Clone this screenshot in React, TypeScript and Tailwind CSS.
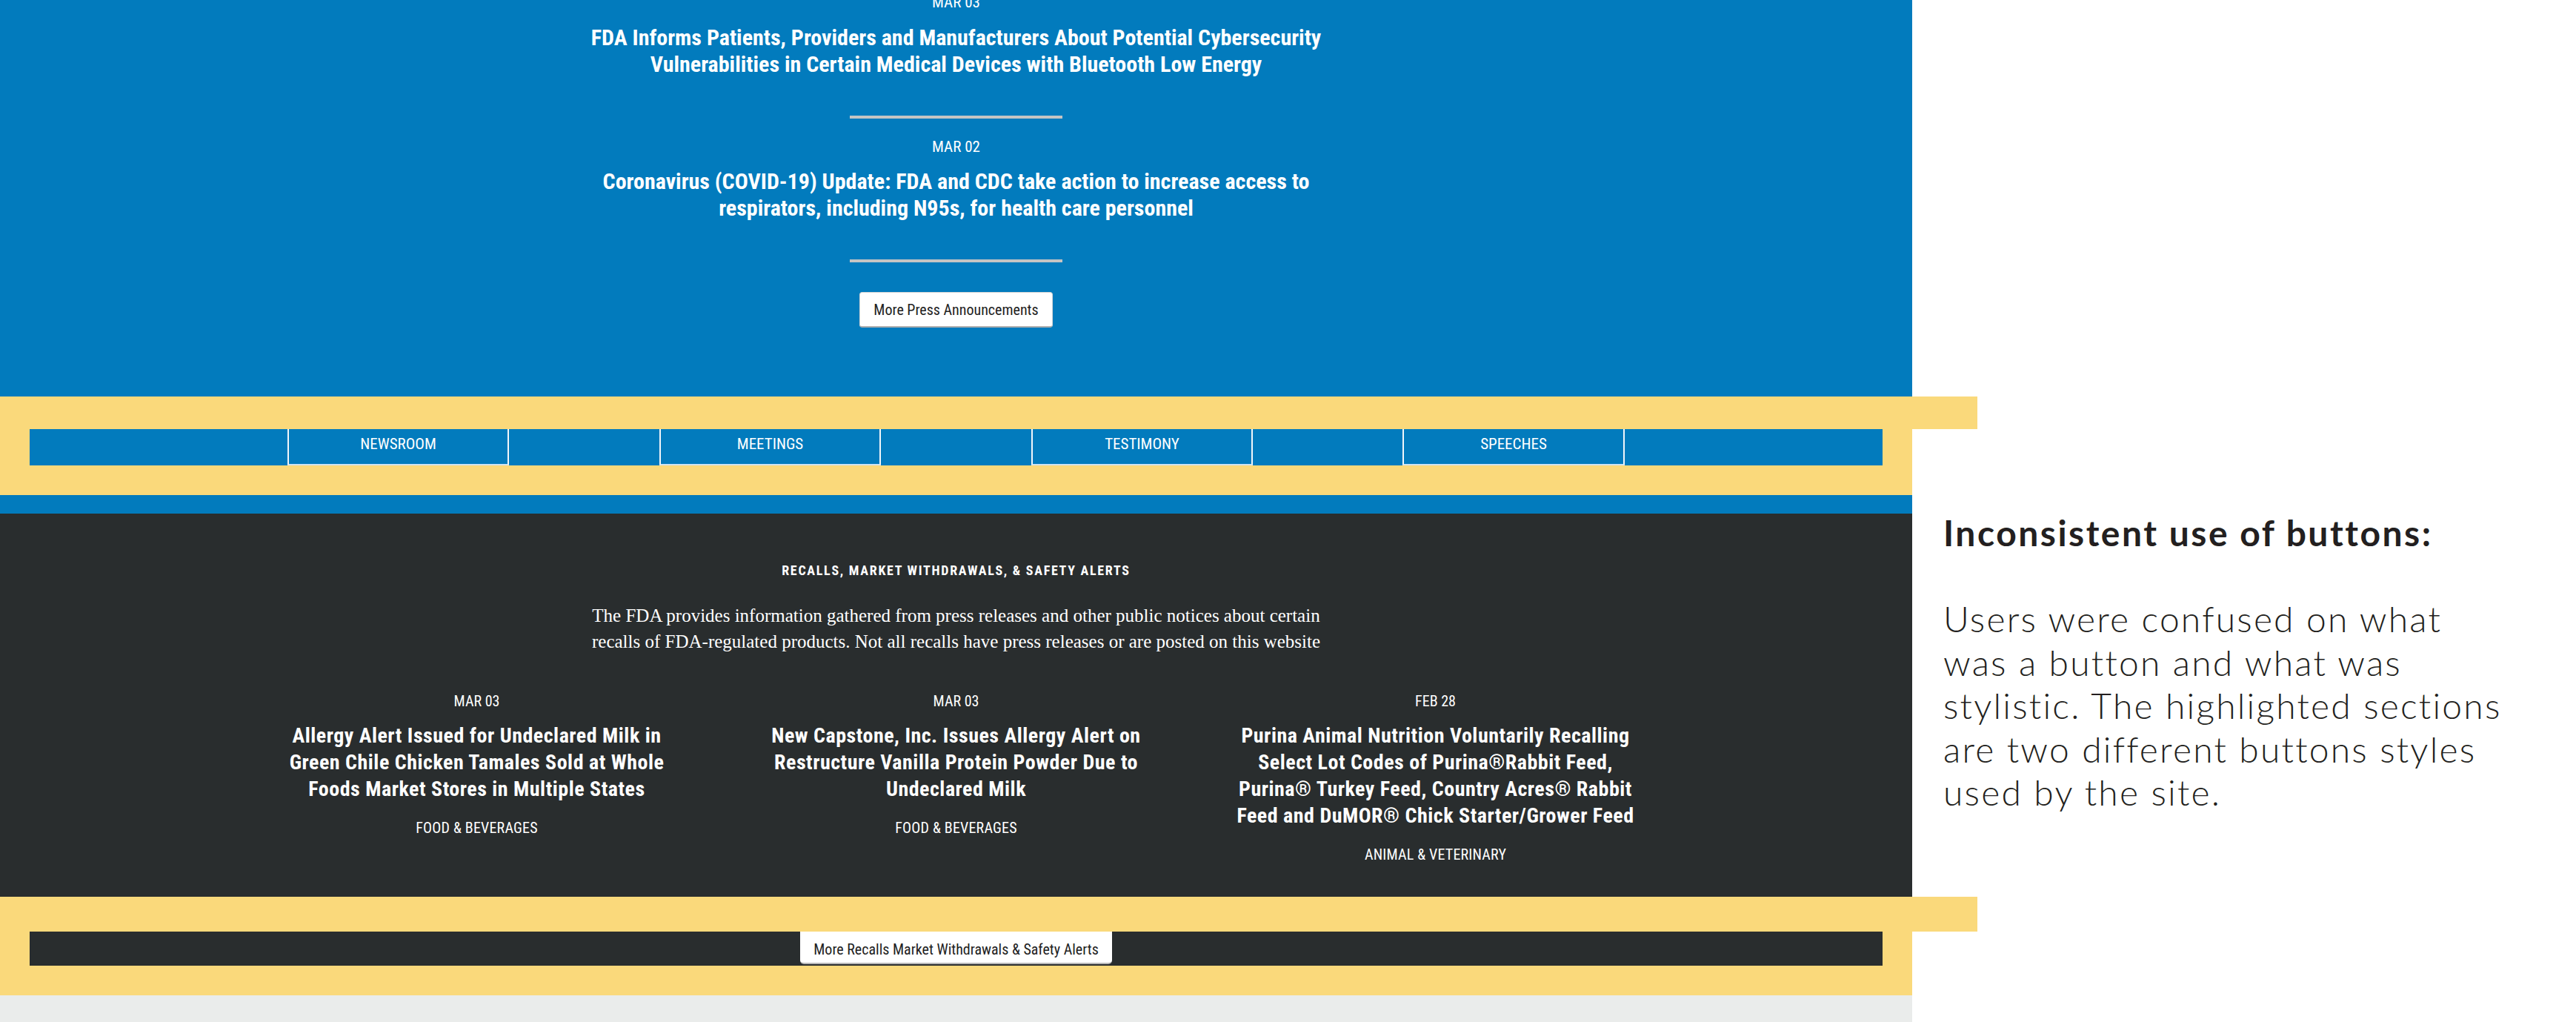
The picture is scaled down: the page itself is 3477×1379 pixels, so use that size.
import React from "react";

const cond = "font-['Roboto',sans-serif] [font-stretch:75%]";

const pressItems = [
  {
    date: "MAR 03",
    lines: [
      "FDA Informs Patients, Providers and Manufacturers About Potential Cybersecurity",
      "Vulnerabilities in Certain Medical Devices with Bluetooth Low Energy",
    ],
  },
  {
    date: "MAR 02",
    lines: [
      "Coronavirus (COVID-19) Update: FDA and CDC take action to increase access to",
      "respirators, including N95s, for health care personnel",
    ],
  },
];

const navCells = [
  { w: "w-[348px]", label: "" },
  { w: "w-[299px]", label: "NEWSROOM" },
  { w: "w-[203px]", label: "" },
  { w: "w-[299px]", label: "MEETINGS" },
  { w: "w-[203px]", label: "" },
  { w: "w-[299px]", label: "TESTIMONY" },
  { w: "w-[202px]", label: "" },
  { w: "w-[300px]", label: "SPEECHES" },
  { w: "w-[348px]", label: "" },
];

const recalls = [
  {
    date: "MAR 03",
    lines: [
      "Allergy Alert Issued for Undeclared Milk in",
      "Green Chile Chicken Tamales Sold at Whole",
      "Foods Market Stores in Multiple States",
    ],
    tag: "FOOD & BEVERAGES",
  },
  {
    date: "MAR 03",
    lines: [
      "New Capstone, Inc. Issues Allergy Alert on",
      "Restructure Vanilla Protein Powder Due to",
      "Undeclared Milk",
    ],
    tag: "FOOD & BEVERAGES",
  },
  {
    date: "FEB 28",
    lines: [
      "Purina Animal Nutrition Voluntarily Recalling",
      "Select Lot Codes of Purina®Rabbit Feed,",
      "Purina® Turkey Feed, Country Acres® Rabbit",
      "Feed and DuMOR® Chick Starter/Grower Feed",
    ],
    tag: "ANIMAL & VETERINARY",
  },
];

function Divider() {
  return <div className="mx-auto mt-[51px] h-[4px] w-[287px] bg-[#c4c4c4]" />;
}

function Lines({ lines }: { lines: string[] }) {
  return (
    <>
      {lines.map((l, i) => (
        <span key={i} className="block whitespace-nowrap">
          {l}
        </span>
      ))}
    </>
  );
}

export default function App() {
  return (
    <div className="flex h-[1379px] w-[3477px] overflow-hidden bg-white">
      {/* screenshot of the site */}
      <div className={`w-[2581px] shrink-0 ${cond}`}>
        {/* Press announcements */}
        <section className="h-[535px] overflow-hidden bg-[#027bbd] text-center text-white">
          {pressItems.map((item, i) => (
            <div key={i}>
              <div className={`text-[21px] leading-[24px] ${i === 0 ? "mt-[-9px]" : "mt-[26px]"}`}>
                {item.date}
              </div>
              <h3 className={`text-[30px] font-bold leading-[36px] ${i === 0 ? "mt-[18px]" : "mt-[17px]"}`}>
                <Lines lines={item.lines} />
              </h3>
              <Divider />
            </div>
          ))}
          <div className="mt-[40px]">
            <button className="inline-flex h-[48px] items-center rounded-[4px] border border-[#d6d6d6] border-b-2 border-b-[#b0b0b0] bg-white px-[18px] text-[20px] text-[#222]">
              More Press Announcements
            </button>
          </div>
        </section>

        {/* Highlight 1: nav buttons */}
        <div className="bg-[#fad97b] px-[40px] pb-[40px]">
          <div className="-ml-[40px] h-[44px] w-[2669px] bg-[#fad97b]" />
          <div className="flex h-[49px] bg-[#027bbd] text-white">
            {navCells.map((c, i) =>
              c.label ? (
                <div
                  key={i}
                  className={`${c.w} shrink-0 border-x-2 border-b-2 border-x-[#f2f6fa] border-b-[#cfe3f1] pt-[8px] text-center text-[21px] leading-[24px]`}
                >
                  {c.label}
                </div>
              ) : (
                <div key={i} className={`${c.w} shrink-0`} />
              )
            )}
          </div>
        </div>
        <div className="h-[25px] bg-[#027bbd]" />

        {/* Recalls */}
        <section className="h-[517px] bg-[#292d2e] pt-[66px] text-center text-white">
          <h2 className="text-[18px] font-bold leading-[22px] tracking-[1.7px]">
            RECALLS, MARKET WITHDRAWALS, &amp; SAFETY ALERTS
          </h2>
          <p className="mt-[32px] font-['Liberation_Serif',serif] text-[25px] leading-[35px] [font-stretch:100%]">
            The FDA provides information gathered from press releases and other public notices about certain
            <br />
            recalls of FDA-regulated products. Not all recalls have press releases or are posted on this website
          </p>
          <div className="mx-auto mt-[51px] grid w-[1941px] grid-cols-3 items-start">
            {recalls.map((r, i) => (
              <div key={i} className="px-[30px]">
                <div className="text-[20px] leading-[24px]">{r.date}</div>
                <h3 className="mt-[17px] text-[28px] font-bold leading-[36px] tracking-[0.5px]">
                  <Lines lines={r.lines} />
                </h3>
                <div className="mt-[22px] text-[20px] leading-[24px] tracking-[0.2px]">{r.tag}</div>
              </div>
            ))}
          </div>
        </section>

        {/* Highlight 2: more recalls */}
        <div className="bg-[#fad97b] px-[40px] pb-[40px]">
          <div className="-ml-[40px] h-[47px] w-[2669px] bg-[#fad97b]" />
          <div className="flex h-[46px] justify-center bg-[#292d2e]">
            <button className="h-[44px] self-start rounded-b-[5px] border-b-2 border-b-[#b8b8b8] bg-white px-[18px] pt-[5px] text-[20px] leading-[24px] text-[#222]">
              More Recalls Market Withdrawals &amp; Safety Alerts
            </button>
          </div>
        </div>
        <div className="h-[36px] bg-[#eaeceb]" />
      </div>

      {/* annotation */}
      <div className="pl-[42px] pt-[690px] font-['Lato',sans-serif] text-[#231f20]">
        <h1 className="text-[48px] font-bold leading-[58px] tracking-[2.5px]">Inconsistent use of buttons:</h1>
        <p className="mt-[58px] text-[48px] font-light leading-[58.5px] tracking-[2.2px]">
          Users were confused on what
          <br />
          was a button and what was
          <br />
          stylistic. The highlighted sections
          <br />
          are two different buttons styles
          <br />
          used by the site.
        </p>
      </div>
    </div>
  );
}
